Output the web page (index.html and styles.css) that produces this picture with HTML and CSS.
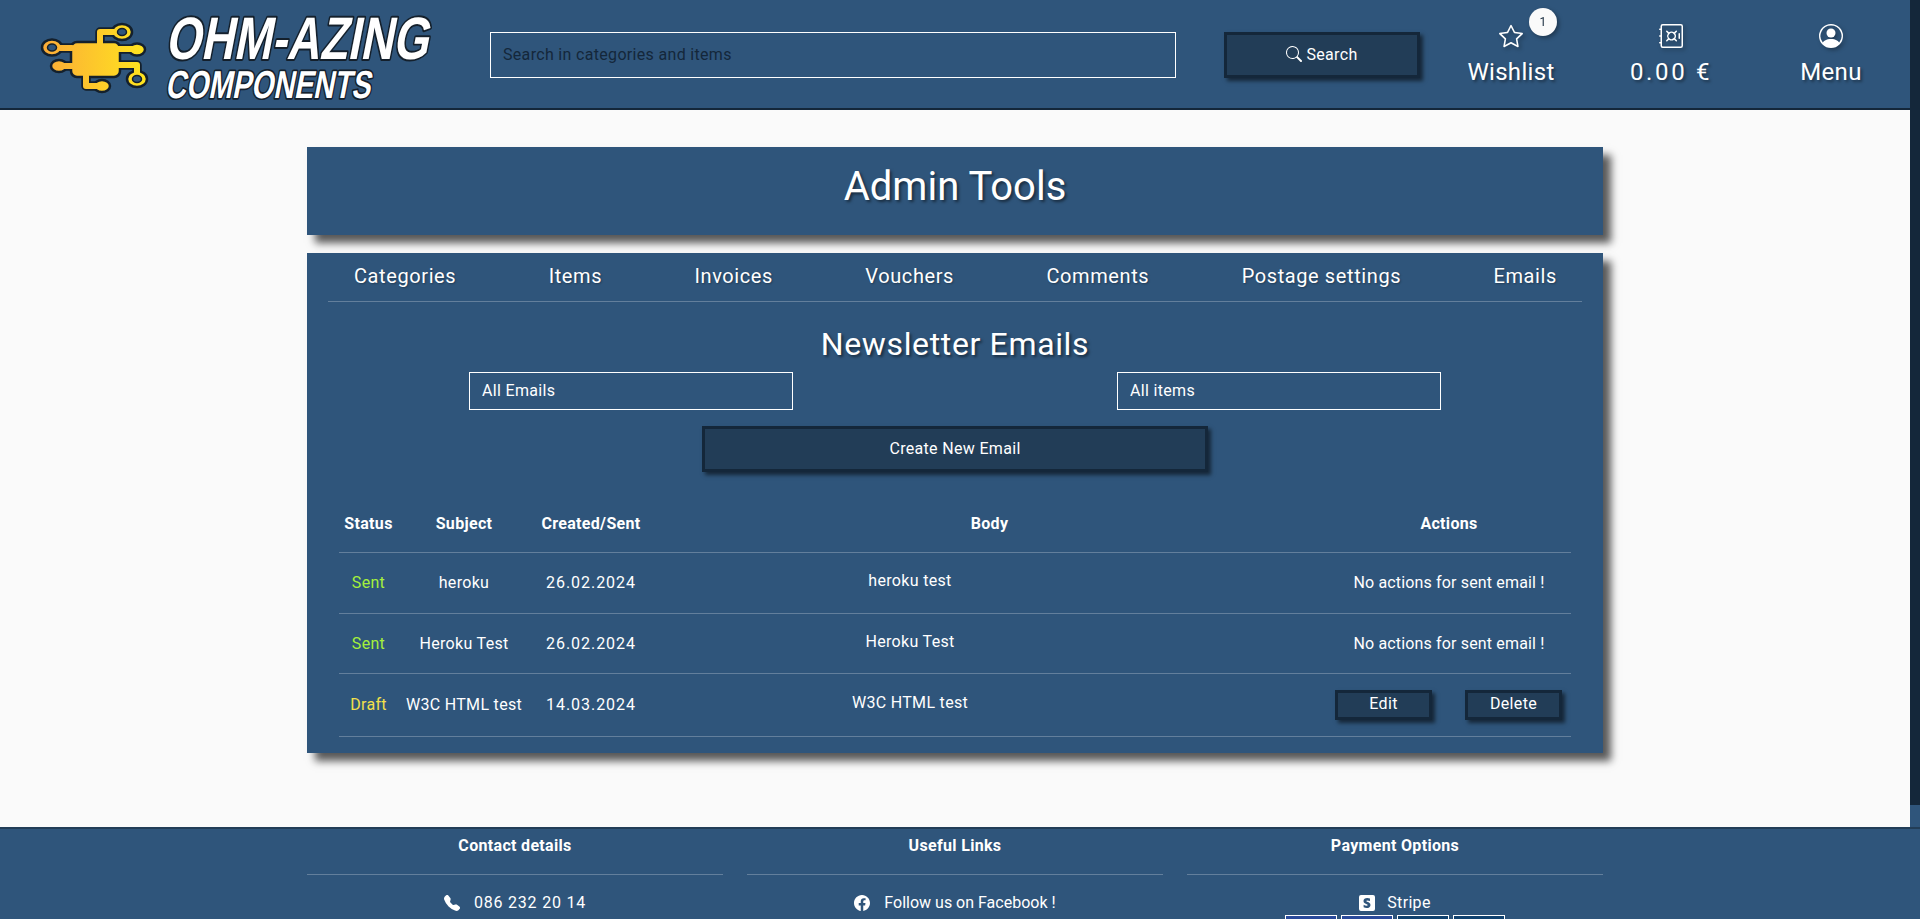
FILE: index.html
```html
<!DOCTYPE html>
<html lang="en">
<head>
<meta charset="utf-8">
<title>Admin Tools - Ohm-Azing Components</title>
<link rel="stylesheet" href="styles.css">
</head>
<body>
<div class="scrollbar"><div class="scroll-thumb"></div></div>
<div class="page">
  <header class="site-header">
    <a class="logo" href="#" aria-label="Ohm-Azing Components">
      <svg class="logo-svg" viewBox="0 0 450 108" width="450" height="108">
        <defs>
          <linearGradient id="chip" gradientUnits="userSpaceOnUse" x1="40" y1="0" x2="148" y2="0">
            <stop offset="0" stop-color="#fbaa38"/>
            <stop offset="1" stop-color="#ffe61e"/>
          </linearGradient>
        </defs>
        <g fill="none" stroke-linecap="round" stroke-linejoin="round">
          <g stroke="#14202c" stroke-width="9.500">
            <path d="M100 44V32H118M60 48H72M60 66H72M118 49H134M118 65H137V76M86 76V86H100"/>
          </g>
          <g stroke="#14202c" stroke-width="2.500">
            <rect x="71" y="42" width="49" height="35" rx="6" fill="url(#chip)"/>
            <ellipse cx="122" cy="32" rx="10" ry="8" fill="url(#chip)"/>
            <ellipse cx="52" cy="47.500" rx="10" ry="8" fill="url(#chip)"/>
            <ellipse cx="59" cy="66" rx="8" ry="6" fill="url(#chip)"/>
            <ellipse cx="137" cy="49.500" rx="8" ry="6" fill="url(#chip)"/>
            <ellipse cx="137" cy="79" rx="10" ry="8" fill="url(#chip)"/>
            <ellipse cx="102" cy="86" rx="8" ry="6" fill="url(#chip)"/>
          </g>
          <g stroke="url(#chip)" stroke-width="6">
            <path d="M100 44V32H118M60 48H72M60 66H72M118 49H134M118 65H137V76M86 76V86H100"/>
          </g>
          <g fill="#2f557b" stroke="#14202c" stroke-width="1.500">
            <ellipse cx="122" cy="32" rx="4.500" ry="3.500"/>
            <ellipse cx="52" cy="47.500" rx="4.500" ry="3.500"/>
            <ellipse cx="137" cy="79" rx="4.500" ry="3.500"/>
          </g>
        </g>
        <text class="logo-title" transform="translate(165 59) skewX(-11)" textLength="263" lengthAdjust="spacingAndGlyphs">OHM-AZING</text>
        <text class="logo-sub" transform="translate(165 98) skewX(-11)" textLength="205" lengthAdjust="spacingAndGlyphs">COMPONENTS</text>
      </svg>
    </a>
    <form class="search-form">
      <input class="search-input" type="text" placeholder="Search in categories and items">
      <button class="btn search-btn" type="button">
        <svg class="icon-16" viewBox="0 0 16 16" fill="currentColor"><path d="M11.742 10.344a6.5 6.5 0 1 0-1.397 1.398h-.001c.03.04.062.078.098.115l3.85 3.85a1 1 0 0 0 1.415-1.414l-3.85-3.85a1.007 1.007 0 0 0-.115-.1zM12 6.5a5.500 5.500 0 1 1-11 0 5.500 5.500 0 0 1 11 0z"/></svg>
        Search
      </button>
    </form>
    <nav class="top-nav">
      <a class="top-item" href="#">
        <span class="top-icon">
          <svg class="icon-24" viewBox="0 0 16 16" fill="currentColor"><path d="M2.866 14.85c-.078.444.36.791.746.593l4.39-2.256 4.389 2.256c.386.198.824-.149.746-.592l-.83-4.73 3.522-3.356c.33-.314.16-.888-.282-.95l-4.898-.696L8.465.792a.513.513 0 0 0-.927 0L5.354 5.12l-4.898.696c-.441.062-.612.636-.283.95l3.523 3.356-.83 4.73zm4.905-2.767-3.686 1.894.694-3.957a.565.565 0 0 0-.163-.505L1.71 6.745l4.052-.576a.525.525 0 0 0 .393-.288L8 2.223l1.847 3.658a.525.525 0 0 0 .393.288l4.052.575-2.906 2.77a.565.565 0 0 0-.163.506l.694 3.957-3.686-1.894a.503.503 0 0 0-.461 0z"/></svg>
          <span class="badge">1</span>
        </span>
        Wishlist
      </a>
      <a class="top-item price" href="#">
        <span class="top-icon">
          <svg class="icon-24" viewBox="0 0 16 16" fill="currentColor"><path d="M1 1.500A1.500 1.500 0 0 1 2.500 0h12A1.500 1.500 0 0 1 16 1.500v13a1.500 1.500 0 0 1-1.500 1.500h-12A1.500 1.500 0 0 1 1 14.500V13H.5a.5.5 0 0 1 0-1H1V8.500H.5a.5.5 0 0 1 0-1H1V4H.5a.5.5 0 0 1 0-1H1V1.500zM2.500 1a.5.5 0 0 0-.5.5v13a.5.5 0 0 0 .5.5h12a.5.5 0 0 0 .5-.5v-13a.5.5 0 0 0-.5-.5h-12z"/><path d="M13.500 6a.5.5 0 0 1 .5.5v3a.5.5 0 0 1-1 0v-3a.5.5 0 0 1 .5-.5zM4.828 4.464a.5.5 0 0 1 .708 0l1.090 1.090a3.003 3.003 0 0 1 3.476 0l1.090-1.090a.5.5 0 1 1 .707.708l-1.090 1.090c.74 1.037.74 2.44 0 3.476l1.090 1.090a.5.5 0 1 1-.707.708l-1.090-1.090a3.002 3.002 0 0 1-3.476 0l-1.090 1.090a.5.5 0 1 1-.708-.708l1.090-1.090a3.003 3.003 0 0 1 0-3.476l-1.090-1.090a.5.5 0 0 1 0-.708zM6.950 6.586a2 2 0 1 0 2.828 2.828A2 2 0 0 0 6.950 6.586z"/></svg>
        </span>
        0.00 €
      </a>
      <a class="top-item" href="#">
        <span class="top-icon">
          <svg class="icon-24" viewBox="0 0 16 16" fill="currentColor"><path d="M11 6a3 3 0 1 1-6 0 3 3 0 0 1 6 0z"/><path fill-rule="evenodd" d="M0 8a8 8 0 1 1 16 0A8 8 0 0 1 0 8zm8-7a7 7 0 0 0-5.468 11.370C3.242 11.226 4.805 10 8 10s4.757 1.225 5.468 2.370A7 7 0 0 0 8 1z"/></svg>
        </span>
        Menu
      </a>
    </nav>
  </header>

  <main class="site-main">
    <section class="card title-card">
      <h1 class="page-title">Admin Tools</h1>
    </section>
    <section class="card tools-card">
      <nav class="tabs">
        <a href="#">Categories</a>
        <a href="#">Items</a>
        <a href="#">Invoices</a>
        <a href="#">Vouchers</a>
        <a href="#">Comments</a>
        <a href="#">Postage settings</a>
        <a href="#">Emails</a>
      </nav>
      <h2 class="section-title">Newsletter Emails</h2>
      <div class="filters">
        <select class="filter"><option>All Emails</option></select>
        <select class="filter"><option>All items</option></select>
      </div>
      <div class="create-row"><button class="btn create-btn" type="button">Create New Email</button></div>
      <table class="email-table">
        <colgroup>
          <col class="col-status"><col class="col-subject"><col class="col-date"><col class="col-body"><col class="col-actions">
        </colgroup>
        <thead>
          <tr><th>Status</th><th>Subject</th><th>Created/Sent</th><th>Body</th><th>Actions</th></tr>
        </thead>
        <tbody>
          <tr class="row-a">
            <td class="sent">Sent</td><td>heroku</td><td class="date">26.02.2024</td>
            <td><p class="body-text">heroku test</p></td>
            <td class="note">No actions for sent email !</td>
          </tr>
          <tr class="row-b">
            <td class="sent">Sent</td><td>Heroku Test</td><td class="date">26.02.2024</td>
            <td><p class="body-text">Heroku Test</p></td>
            <td class="note">No actions for sent email !</td>
          </tr>
          <tr class="row-c">
            <td class="draft">Draft</td><td>W3C HTML test</td><td class="date">14.03.2024</td>
            <td><p class="body-text">W3C HTML test</p></td>
            <td><div class="actions"><button class="btn small-btn" type="button">Edit</button><button class="btn small-btn" type="button">Delete</button></div></td>
          </tr>
        </tbody>
      </table>
    </section>
  </main>

  <footer class="site-footer">
    <div class="footer-grid">
      <div class="footer-col">
        <h3 class="footer-head">Contact details</h3>
        <a class="footer-row phone" href="#">
          <svg class="icon-16" viewBox="0 0 16 16" fill="currentColor"><path fill-rule="evenodd" d="M1.885.511a1.745 1.745 0 0 1 2.610.163L6.290 2.980c.329.423.445.974.315 1.494l-.547 2.190a.678.678 0 0 0 .178.643l2.457 2.457a.678.678 0 0 0 .644.178l2.189-.547a1.745 1.745 0 0 1 1.494.315l2.306 1.794c.829.645.905 1.870.163 2.611l-1.034 1.034c-.74.74-1.846 1.065-2.877.702a18.634 18.634 0 0 1-7.010-4.420 18.634 18.634 0 0 1-4.420-7.009c-.362-1.030-.037-2.137.703-2.877L1.885.511z"/></svg>
          086 232 20 14
        </a>
      </div>
      <div class="footer-col">
        <h3 class="footer-head">Useful Links</h3>
        <a class="footer-row tight" href="#">
          <svg class="icon-16" viewBox="0 0 16 16" fill="currentColor"><path d="M16 8.049c0-4.446-3.582-8.050-8-8.050C3.580 0-.002 3.603-.002 8.050c0 4.017 2.926 7.253 6.750 7.951v-5.625h-2.030V8.050H6.750V6.275c0-2.017 1.195-3.131 3.022-3.131.876 0 1.791.157 1.791.157v1.980h-1.009c-.993 0-1.303.621-1.303 1.258v1.510h2.218l-.354 2.326H9.250V16c3.824-.604 6.750-4.032 6.750-7.951z"/></svg>
          Follow us on Facebook !
        </a>
        <a class="footer-row icon-only" href="#" aria-label="Link">
          <svg class="icon-16" viewBox="0 0 16 16" fill="currentColor"><rect x="0" y="2" width="16" height="14" rx="3"/></svg>
        </a>
      </div>
      <div class="footer-col">
        <h3 class="footer-head">Payment Options</h3>
        <a class="footer-row" href="#">
          <svg class="icon-16" viewBox="0 0 16 16" fill="currentColor"><path d="M2 0a2 2 0 0 0-2 2v12a2 2 0 0 0 2 2h12a2 2 0 0 0 2-2V2a2 2 0 0 0-2-2H2Zm6.226 5.385c-.584 0-.937.164-.937.593 0 .468.607.674 1.360.930 1.228.415 2.844.963 2.851 2.993C11.500 11.868 9.924 13 7.630 13a7.662 7.662 0 0 1-3.009-.626V9.758c.926.506 2.095.880 3.010.880.617 0 1.058-.165 1.058-.671 0-.518-.658-.755-1.453-1.041C6.026 8.490 4.500 7.940 4.500 6.110 4.500 4.165 5.988 3 8.226 3a7.300 7.300 0 0 1 2.734.505v2.583c-.838-.45-1.896-.703-2.734-.703Z"/></svg>
          Stripe
        </a>
        <div class="pay-cards">
          <span class="pay-card pay-visa"></span>
          <span class="pay-card pay-visa"></span>
          <span class="pay-card pay-amex"></span>
          <span class="pay-card pay-amex"></span>
        </div>
      </div>
    </div>
  </footer>
</div>
</body>
</html>
```

FILE: styles.css
```css
* { box-sizing: border-box; }

html, body {
  margin: 0;
  height: 100%;
  overflow: hidden;
}

body {
  font-family: Roboto, "Liberation Sans", sans-serif;
  font-size: 16px;
  letter-spacing: 0.02em;
  color: #fff;
  background: #fafafa;
}

a { color: inherit; text-decoration: none; }

.scrollbar {
  position: fixed;
  top: 0;
  right: 0;
  bottom: 0;
  width: 10px;
  background: #2f557b;
}

.scroll-thumb {
  height: 805px;
  background: #14273a;
}

.page { margin-right: 10px; }

.icon-16 { width: 16px; height: 16px; flex: none; }
.icon-24 { width: 24px; height: 24px; display: block; }

/* Buttons */
.btn {
  font: inherit;
  letter-spacing: inherit;
  color: #fff;
  background: #223d57;
  border: 3px solid #14273a;
  box-shadow: 3px 3px 4px rgba(0, 0, 0, 0.55);
  cursor: pointer;
  padding: 0 0 2px;
}

/* Header */
.site-header {
  display: flex;
  align-items: flex-start;
  height: 110px;
  background: #2f557b;
  border-bottom: 2px solid #14273a;
}

.logo { display: block; width: 490px; flex: none; }
.logo-svg { display: block; overflow: visible; }

.logo-title,
.logo-sub {
  font-family: "Liberation Sans", Arial, sans-serif;
  font-weight: 700;
  letter-spacing: 0;
  fill: #fff;
  stroke: #14202c;
  paint-order: stroke;
  stroke-linejoin: round;
}
.logo-title { font-size: 60px; stroke-width: 4px; }
.logo-sub { font-size: 39px; stroke-width: 3.5px; }

.search-form {
  display: flex;
  gap: 48px;
  padding-top: 32px;
  flex: none;
}

.search-input {
  width: 686px;
  height: 46px;
  padding: 0 12px 2px;
  font: inherit;
  letter-spacing: inherit;
  color: #fff;
  background: transparent;
  border: 1px solid #fff;
  outline: none;
}
.search-input::placeholder { color: #14273a; opacity: 1; }

.search-btn {
  width: 196px;
  height: 46px;
  display: flex;
  align-items: center;
  justify-content: center;
  gap: 4px;
}

.top-nav {
  display: grid;
  grid-template-columns: repeat(3, 160px);
  margin-left: 11px;
}

.top-item {
  display: flex;
  flex-direction: column;
  align-items: center;
  gap: 10px;
  padding-top: 24px;
  font-size: 24px;
  line-height: 28px;
  text-shadow: 2px 2px 3px rgba(0, 0, 0, 0.4);
}

.price { letter-spacing: 0.11em; }

.top-icon { position: relative; display: block; height: 24px; filter: drop-shadow(2px 2px 2px rgba(0, 0, 0, 0.35)); }

.badge {
  position: absolute;
  left: 30px;
  top: -16px;
  width: 28px;
  height: 28px;
  border-radius: 50%;
  background: #fafafa;
  color: #14273a;
  font-size: 12px;
  line-height: 28px;
  text-align: center;
  text-shadow: none;
}

/* Main */
.site-main {
  padding: 37px 0 74px;
  display: flex;
  flex-direction: column;
  align-items: center;
  gap: 18px;
  background: #fafafa;
}

.card {
  width: 1296px;
  background: #2f557b;
  box-shadow: 8px 8px 8px rgba(0, 0, 0, 0.65);
}

.title-card {
  height: 88px;
  display: flex;
  justify-content: center;
  padding-top: 16px;
}

.page-title {
  margin: 0;
  font-size: 40px;
  line-height: 48px;
  font-weight: 400;
  letter-spacing: 0;
  text-shadow: 2px 2px 3px rgba(0, 0, 0, 0.5);
}

.tools-card { padding-bottom: 16px; }

.tabs {
  display: flex;
  justify-content: space-between;
  height: 49px;
  margin: 0 21px;
  padding: 11px 25px 0 26px;
  font-size: 20px;
  line-height: 24px;
  letter-spacing: 0.03em;
  border-bottom: 1px solid rgba(255, 255, 255, 0.25);
  text-shadow: 1px 1px 2px rgba(0, 0, 0, 0.3);
}

.section-title {
  margin: 23px 0 0;
  font-size: 32px;
  line-height: 38px;
  font-weight: 400;
  letter-spacing: 0.02em;
  text-align: center;
  text-shadow: 2px 2px 3px rgba(0, 0, 0, 0.5);
}

.filters {
  display: grid;
  grid-template-columns: 1fr 1fr;
  justify-items: center;
  margin-top: 9px;
}

.filter {
  width: 324px;
  height: 38px;
  padding: 0 12px 2px;
  font: inherit;
  letter-spacing: inherit;
  color: #fff;
  background: transparent;
  border: 1px solid #fff;
  border-radius: 0;
  appearance: none;
}
.filter option { color: #000; }

.create-row {
  display: flex;
  justify-content: center;
  margin-top: 16px;
}
.create-btn { width: 506px; height: 46px; }

/* Table */
.email-table {
  width: 1232px;
  margin: 21px 0 0 32px;
  border-collapse: collapse;
  table-layout: fixed;
  text-align: center;
}

.col-status { width: 59px; }
.col-subject { width: 132px; }
.col-date { width: 122px; }
.col-body { width: 675px; }
.col-actions { width: 244px; }

.email-table th,
.email-table td {
  padding: 0;
  border-bottom: 1px solid rgba(255, 255, 255, 0.25);
  vertical-align: middle;
}

.email-table th { padding-top: 2px; }

.email-table thead tr { height: 59px; }
.email-table .row-a { height: 61px; }
.email-table .row-b { height: 60px; }
.email-table .row-c { height: 63px; }

.sent { color: #a5f03c; }
.draft { color: #f3e04a; }

.email-table .date { letter-spacing: 0.06em; }
.email-table .note { letter-spacing: 0.01em; }

.body-text {
  width: 516px;
  margin: 0 0 4px;
}

.actions {
  display: flex;
  justify-content: space-between;
  padding: 0 9px 0 8px;
}

.small-btn { width: 97px; height: 30px; }

/* Footer */
.site-footer {
  margin-right: -10px;
  padding-right: 10px;
  position: relative;
  height: 300px;
  background: #2f557b;
  border-top: 2px solid #223d57;
}

.footer-grid {
  display: grid;
  grid-template-columns: repeat(3, 416px);
  gap: 24px;
  justify-content: center;
}

.footer-head {
  margin: 0 0 16px;
  padding: 5px 0 16px;
  font-size: 16px;
  line-height: 24px;
  font-weight: 700;
  text-align: center;
  border-bottom: 1px solid rgba(255, 255, 255, 0.25);
}

.footer-row {
  display: flex;
  align-items: center;
  justify-content: center;
  gap: 12px;
  height: 24px;
}

.phone { letter-spacing: 0.05em; gap: 14px; }
.tight { letter-spacing: 0; gap: 14px; }
.icon-only { justify-content: flex-start; padding-left: 121px; }

.pay-cards {
  display: flex;
  justify-content: center;
  gap: 4px;
}

.pay-card {
  width: 52px;
  height: 32px;
  border: 1px solid #fff;
}
.pay-visa { background: #2a4a9b; }
.pay-amex { background: #11426f; }
```
